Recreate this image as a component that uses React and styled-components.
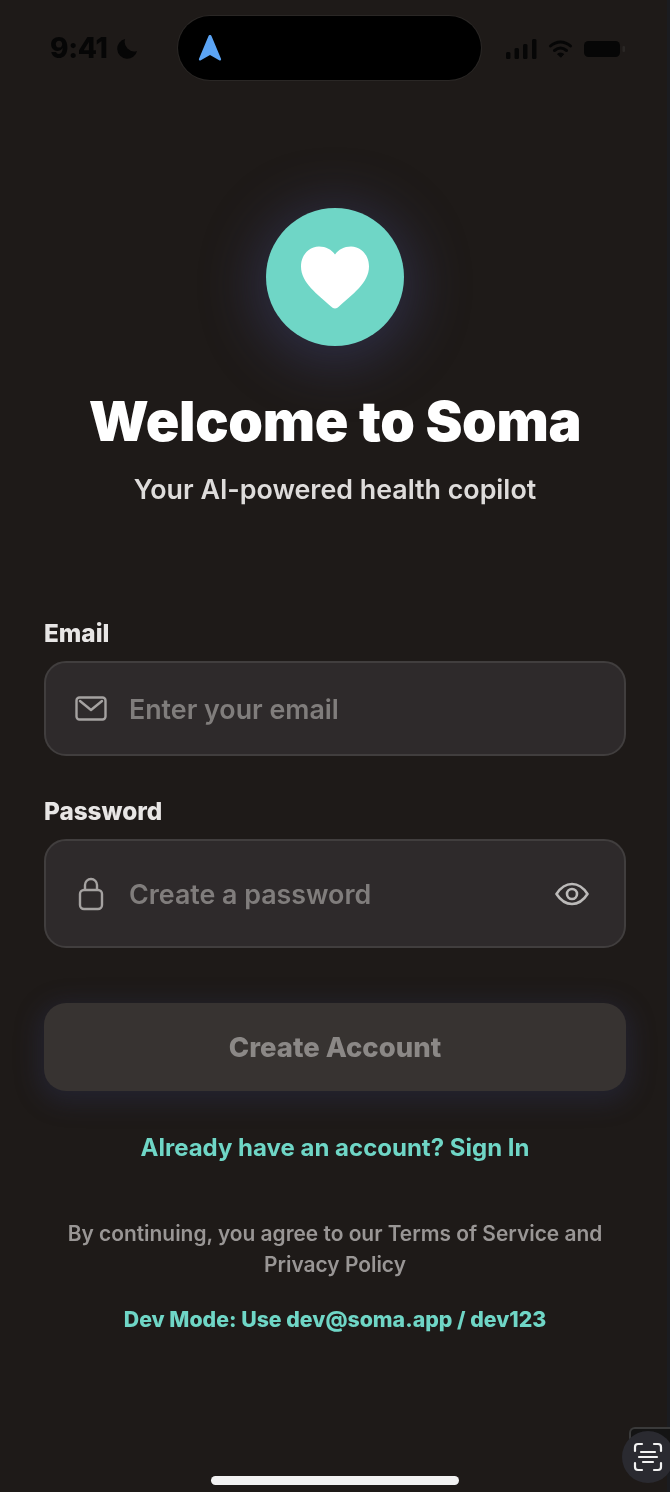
import styled, { createGlobalStyle } from "styled-components";

const GlobalStyle = createGlobalStyle`
html, body {
  margin: 0;
  padding: 0;
  background: #1e1a18;
}
* {
  box-sizing: border-box;
}
`

const Page = styled.div`
position: relative;
display: flex;
flex-direction: column;
width: 670px;
height: 1492px;
overflow: hidden;
background: #1e1a18;
box-shadow: inset -3px 0 0 #1b1c20;
font-family: Inter, "Liberation Sans", sans-serif;
filter: blur(0.7px);
`

const StatusBar = styled.div`
display: flex;
align-items: center;
height: 64px;
margin-top: 16px;
padding: 0 44px 0 50px;
`

const Clock = styled.div`
display: flex;
align-items: center;
gap: 9px;
width: 128px;
color: #060606;
font-size: 28px;
font-weight: 800;
letter-spacing: -0.3px;
`

const Island = styled.div`
display: flex;
align-items: center;
width: 303px;
height: 64px;
padding-left: 20px;
border-radius: 32px;
background: #000;
box-shadow: 0 0 0 1px #2a2725;
`

const StatusIcons = styled.div`
display: flex;
align-items: center;
gap: 11px;
margin-left: auto;
padding-top: 1px;
`

const Hero = styled.div`
display: flex;
flex-direction: column;
align-items: center;
padding-top: 128px;
`

const LogoCircle = styled.div`
display: flex;
align-items: center;
justify-content: center;
width: 138px;
height: 138px;
border-radius: 50%;
background: #6fd6c6;
box-shadow: 0 8px 56px 10px rgba(68, 74, 130, 0.42);
`

const Title = styled.h1`
margin: 46px 0 0;
color: #fff;
font-size: 55.5px;
line-height: 58px;
font-weight: 900;
letter-spacing: -0.3px;
white-space: nowrap;
`

const Subtitle = styled.p`
margin: 22px 0 0;
color: #dedcdb;
font-size: 26.8px;
line-height: 34px;
font-weight: 600;
`

const Form = styled.div`
display: flex;
flex-direction: column;
padding: 113px 44px 0;
`

const Label = styled.label`
margin-bottom: 14px;
color: #e8e6e5;
font-size: 24.3px;
line-height: 28px;
font-weight: 800;
`

const Field = styled.div`
display: flex;
align-items: center;
gap: 22px;
height: ${({ $height }) => $height}px;
margin-bottom: ${({ $gap }) => $gap}px;
padding: 0 35px 0 29px;
border: 2px solid #413e3e;
border-radius: 22px;
background: #2e2a2b;
`

const Placeholder = styled.span`
flex: 1;
color: #807d7c;
font-size: 26.8px;
font-weight: 600;
`

const SubmitButton = styled.div`
display: flex;
align-items: center;
justify-content: center;
height: 88px;
margin-top: 55px;
border-radius: 22px;
background: #373331;
color: #8b8886;
font-size: 27.5px;
font-weight: 800;
box-shadow: 0 6px 24px 6px rgba(48, 52, 92, 0.32);
`

const Footer = styled.div`
display: flex;
flex-direction: column;
align-items: center;
padding: 0 44px;
text-align: center;
`

const SignIn = styled.div`
margin-top: 42px;
color: #6fd6c6;
font-size: 24px;
line-height: 30px;
font-weight: 700;
`

const Terms = styled.p`
margin: 55px 0 0;
width: 560px;
color: #999695;
font-size: 20.9px;
line-height: 31px;
font-weight: 600;
`

const DevHint = styled.div`
margin-top: 25px;
color: #6fd6c6;
font-size: 21.3px;
line-height: 28px;
font-weight: 800;
`

const HomeIndicator = styled.div`
width: 248px;
height: 9px;
margin: auto auto 7px;
border-radius: 5px;
background: #f2f2f2;
`

const ScanTab = styled.div`
position: absolute;
top: 1427px;
left: 629px;
width: 41px;
height: 30px;
border: 2px solid #3a3a3a;
border-right: 0;
border-bottom: 0;
border-radius: 6px 0 0 0;
background: #141414;
`

const ScanButton = styled.div`
position: absolute;
top: 1431px;
left: 622px;
display: flex;
align-items: center;
justify-content: center;
width: 52px;
height: 52px;
border-radius: 50%;
background: #2a2a30;
`

const MailIcon = () => (
  <svg width="32" height="26" viewBox="0 0 32 26" fill="none" stroke="#a5a2a1" strokeWidth="2.4">
    <rect x="1.5" y="1.5" width="29" height="22" rx="3" />
    <path d="M5 5l11 9L27 5" strokeLinecap="round" strokeLinejoin="round" />
  </svg>
)

const LockIcon = () => (
  <svg width="32" height="34" viewBox="0 0 32 34" fill="none" stroke="#a5a2a1" strokeWidth="2.4">
    <rect x="5" y="13" width="22" height="19" rx="4" />
    <path d="M10 13V8a6 6 0 0 1 12 0v5" />
  </svg>
)

const EyeIcon = () => (
  <svg width="34" height="24" viewBox="0 0 34 24" fill="none" stroke="#bcbab9" strokeWidth="2.6">
    <path d="M1.5 12C6 5 11 2 17 2s11 3 15.500 10C28 19 23 22 17 22S6 19 1.500 12z" strokeLinejoin="round" />
    <circle cx="17" cy="12" r="5" />
  </svg>
)

const HeartIcon = () => (
  <svg width="68" height="63" viewBox="0 0 68 63" fill="#fff">
    <path d="M34 62.500c-1.500 0-2.700-.7-4-1.900C17 48.500 0 37 0 20.500 0 9 8 .5 18 .5c7 0 12.500 3 16 8 3.500-5 9-8 16-8 10 0 18 8.500 18 20 0 16.500-17 28-30 40.100-1.300 1.200-2.500 1.900-4 1.900z" />
  </svg>
)

const MoonIcon = () => (
  <svg width="21" height="21" viewBox="0 0 22 22" fill="#060606">
    <path d="M8.500 1a10.500 10.500 0 1 0 12.500 12.500A10 10 0 0 1 8.500 1z" />
  </svg>
)

const ArrowIcon = () => (
  <svg width="24" height="28" viewBox="0 0 24 28" fill="#5ba4f5">
    <path d="M12 1c.8 0 1.300.5 1.600 1.200l9.400 22.500c.5 1.200-.7 2.200-1.800 1.600L12 21 2.800 26.300c-1.100.6-2.300-.4-1.800-1.600L10.400 2.200C10.700 1.500 11.200 1 12 1z" />
  </svg>
)

const SignalIcon = () => (
  <svg width="31" height="20" viewBox="0 0 31 20" fill="#060606">
    <rect x="0" y="13" width="4.500" height="7" rx="1.500" />
    <rect x="8.500" y="9" width="4.500" height="11" rx="1.500" />
    <rect x="17" y="5" width="4.500" height="15" rx="1.500" />
    <rect x="26" y="0" width="4.500" height="20" rx="1.500" />
  </svg>
)

const WifiIcon = () => (
  <svg width="25" height="20" viewBox="0 0 24 20" fill="none" stroke="#060606" strokeWidth="3" strokeLinecap="round">
    <path d="M2 7c6-5.500 14-5.500 20 0" />
    <path d="M6 11.500c3.700-3 8.300-3 12 0" />
    <path d="M12 18l-3-3c1.800-1.300 4.200-1.300 6 0z" fill="#060606" strokeWidth="1" />
  </svg>
)

const BatteryIcon = () => (
  <svg width="42" height="20" viewBox="0 0 42 20" fill="#060606">
    <rect x="0" y="2" width="36" height="16" rx="4.500" />
    <rect x="38.500" y="7" width="2.500" height="6" rx="1" fill="#2a2725" />
  </svg>
)

const ScanIcon = () => (
  <svg width="30" height="30" viewBox="0 0 30 30" fill="none" stroke="#f2f2f2" strokeWidth="2.200" strokeLinecap="round">
    <path d="M9 2H5a3 3 0 0 0-3 3v4M21 2h4a3 3 0 0 1 3 3v4M9 28H5a3 3 0 0 1-3-3v-4M21 28h4a3 3 0 0 0 3-3v-4" />
    <path d="M8 10h14M6 15h18M10 20h10" />
  </svg>
)

const App = () => {
  return (
    <Page>
      <GlobalStyle />
      <StatusBar>
        <Clock>9:41<MoonIcon /></Clock>
        <Island><ArrowIcon /></Island>
        <StatusIcons>
          <SignalIcon />
          <WifiIcon />
          <BatteryIcon />
        </StatusIcons>
      </StatusBar>
      <Hero>
        <LogoCircle><HeartIcon /></LogoCircle>
        <Title>Welcome to Soma</Title>
        <Subtitle>Your AI-powered health copilot</Subtitle>
      </Hero>
      <Form>
        <Label>Email</Label>
        <Field $height={95} $gap={41}>
          <MailIcon />
          <Placeholder>Enter your email</Placeholder>
        </Field>
        <Label>Password</Label>
        <Field $height={109} $gap={0}>
          <LockIcon />
          <Placeholder>Create a password</Placeholder>
          <EyeIcon />
        </Field>
        <SubmitButton>Create Account</SubmitButton>
      </Form>
      <Footer>
        <SignIn>Already have an account? Sign In</SignIn>
        <Terms>By continuing, you agree to our Terms of Service and Privacy Policy</Terms>
        <DevHint>Dev Mode: Use dev@soma.app / dev123</DevHint>
      </Footer>
      <HomeIndicator />
      <ScanTab />
      <ScanButton><ScanIcon /></ScanButton>
    </Page>
  )
}

export default App
